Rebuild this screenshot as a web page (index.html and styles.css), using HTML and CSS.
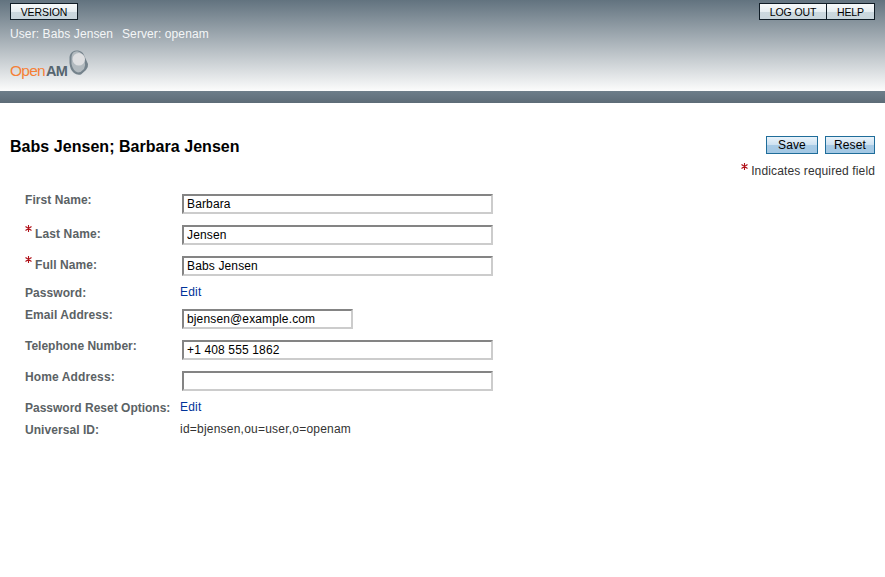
FILE: index.html
```html
<!DOCTYPE html>
<html lang="en">
<head>
<meta charset="utf-8">
<title>OpenAM</title>
<link rel="stylesheet" href="styles.css">
</head>
<body>
<header class="masthead">
  <div class="toolbar">
    <button class="mast-btn version">VERSION</button>
    <div class="mast-group"><button class="mast-btn logout">LOG OUT</button><button class="mast-btn help">HELP</button></div>
  </div>
  <div class="session"><span class="user">User: Babs Jensen</span><span class="server">Server: openam</span></div>
  <div class="logo">
    <span class="logo-open">Open</span><span class="logo-am">AM</span>
    <svg class="logo-mark" width="20" height="26" viewBox="0 0 20 26">
      <path fill="#75838c" d="M4 1.500Q6 0 9 .5Q13 1 14.500 4L17 9.500L19 14Q19.500 17 17 20L12 24.500Q8 25.500 5 23Q1 20 .5 13V7Q1 3 4 1.500Z"/>
      <path fill="#b2babf" d="M5 2Q10 0 13 4L15.500 11Q17 15 15 19Q12 22.500 9 22.500Q4 21 2.500 14V7Q3 3 5 2Z"/>
      <ellipse fill="#dedfe1" cx="9.800" cy="9.300" rx="6.200" ry="6.300"/>
    </svg>
  </div>
</header>
<div class="band"></div>
<main>
  <div class="title-row">
    <h1>Babs Jensen; Barbara Jensen</h1>
    <div class="actions"><button class="action save">Save</button><button class="action reset">Reset</button></div>
  </div>
  <div class="legend"><svg class="star" width="7" height="7" viewBox="0 0 7 7"><path d="M3.500 0V7M.5 1.500 6.500 5.500M6.500 1.500.5 5.500"/></svg>Indicates required field</div>
  <form class="fields">
    <div class="row"><label>First Name:</label><input type="text" value="Barbara"></div>
    <div class="row required"><label><svg class="star" width="7" height="7" viewBox="0 0 7 7"><path d="M3.500 0V7M.5 1.500 6.500 5.500M6.500 1.500.5 5.500"/></svg><span class="last">Last Name:</span></label><input type="text" value="Jensen"></div>
    <div class="row required"><label><svg class="star" width="7" height="7" viewBox="0 0 7 7"><path d="M3.500 0V7M.5 1.500 6.500 5.500M6.500 1.500.5 5.500"/></svg>Full Name:</label><input type="text" value="Babs Jensen"></div>
    <div class="row short"><label>Password:</label><a href="#">Edit</a></div>
    <div class="row"><label>Email Address:</label><input class="email" type="text" value="bjensen@example.com"></div>
    <div class="row"><label class="tight">Telephone Number:</label><input type="text" value="+1 408 555 1862"></div>
    <div class="row"><label class="home">Home Address:</label><input type="text" value=""></div>
    <div class="row short"><label class="tight">Password Reset Options:</label><a href="#">Edit</a></div>
    <div class="row short"><label>Universal ID:</label><span class="value">id=bjensen,ou=user,o=openam</span></div>
  </form>
</main>
</body>
</html>
```
FILE: styles.css
```css
* { box-sizing: border-box; }
body {
  margin: 0;
  background: #fff;
  color: #333;
  font: 12px/14px "Liberation Sans", Arial, sans-serif;
}
button, input { font-family: inherit; margin: 0; border-radius: 0; color: #000; }
.masthead {
  height: 91px;
  padding: 3px 10px 0;
  background: linear-gradient(#62737f, #fcfcfc);
}
.toolbar { display: flex; justify-content: space-between; }
.mast-group { display: flex; }
.mast-btn {
  height: 17px;
  padding: 2px 0 0;
  border: 1px solid #0f1c26;
  background: linear-gradient(#f7fafb, #e6eef2 50%, #cbd8df 51%, #c9d6dd);
  font-size: 10.500px;
  line-height: 13px;
  letter-spacing: -.1px;
  white-space: nowrap;
}
.version { width: 68px; }
.logout { width: 68px; }
.help { width: 48px; border-left: 0; }
.session { display: flex; gap: 9px; margin-top: 7px; color: #f4f6f7; letter-spacing: .1px; }
.user { width: 103px; }
.session span { white-space: nowrap; }
.logo { display: flex; height: 28px; margin-top: 9px; line-height: 18px; }
.logo-open { width: 36px; padding-top: 12px; color: #f58136; font-size: 15.500px; letter-spacing: -.75px; }
.logo-am { width: 23px; padding-top: 12px; color: #56656f; font-size: 14.500px; font-weight: bold; letter-spacing: -.7px; }
.logo-mark { flex: none; }
.band { height: 12px; background: linear-gradient(#6e7e8a, #5d6c77); }
main { padding: 33px 10px 0; }
.title-row { display: flex; justify-content: space-between; height: 25px; }
h1 { margin: 1px 0 0; color: #000; font-size: 16px; line-height: 20px; letter-spacing: .04px; }
.actions { display: flex; gap: 7px; }
.action {
  height: 18px;
  padding: 0;
  border: 1px solid #1f6d9a;
  background: linear-gradient(#eaf3fa, #cde1f1 50%, #a9cbe6 51%, #a3c8e4);
  font-size: 12px;
  line-height: 15px;
  letter-spacing: .1px;
}
.save { width: 52px; }
.reset { width: 50px; }
.legend { display: flex; justify-content: flex-end; gap: 3px; height: 28px; padding-top: 3px; letter-spacing: .13px; }
.legend .star { margin-top: -1px; }
.star { flex: none; fill: none; stroke: #b01018; stroke-width: 1.1; }
.fields { padding-left: 15px; }
.row { display: grid; grid-template-columns: 155px 1fr; align-items: start; height: 31px; }
.short { height: 22px; }
label { display: flex; gap: 3px; padding-top: 4px; color: #5b6265; font-weight: bold; letter-spacing: .06px; white-space: nowrap; }
.tight { letter-spacing: 0; }
.last, .home { letter-spacing: .12px; }
.required label { padding-top: 7px; }
.required .star { margin-top: -2px; }
input {
  width: 311px;
  height: 20px;
  margin: 5px 0 0 2px;
  padding: 0 3px;
  border: 2px solid;
  border-color: #848484 #ccc #ccc #848484;
  background: #fff;
  font-size: 12px;
  letter-spacing: .14px;
}
.email { width: 171px; }
a, .value { padding-top: 3px; letter-spacing: .22px; }
a { color: #039; text-decoration: none; }
```
